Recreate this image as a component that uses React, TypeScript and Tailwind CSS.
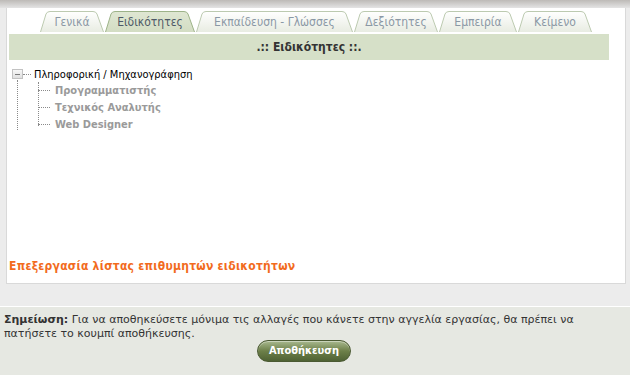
import React from "react";

const font = { fontFamily: '"DejaVu Sans Condensed", "DejaVu Sans", Verdana, sans-serif' };
const wide = { fontFamily: '"DejaVu Sans", Verdana, sans-serif' };

function Tab({ label, w, active }: { label: string; w: number; active?: boolean }) {
  const h = 22;
  const d = `M0.5,${h} L6,4 Q7,1.5 10,1.5 L${w - 11},1.5 Q${w - 8},1.5 ${w - 7},4 L${w - 0.5},${h}`;
  const id = active ? "ga" : "gi";
  return (
    <div className="relative h-[22px] shrink-0" style={{ width: w }}>
      <svg className="absolute inset-0" width={w} height={h}>
        <defs>
          <linearGradient id="gi" x1="0" y1="0" x2="0" y2="1">
            <stop offset="0" stopColor="#ffffff" />
            <stop offset="1" stopColor="#e8ece2" />
          </linearGradient>
          <linearGradient id="ga" x1="0" y1="0" x2="0" y2="1">
            <stop offset="0" stopColor="#dfe7d3" />
            <stop offset="1" stopColor="#d3ddc3" />
          </linearGradient>
        </defs>
        <path d={d + " Z"} fill={`url(#${id})`} stroke="none" />
        <path d={d} fill="none" stroke={active ? "#9db389" : "#bccab0"} strokeWidth="1" />
      </svg>
      <div
        className={`relative flex h-full items-center justify-center pt-[1px] text-[12px] ${
          active ? "text-[#4d5966]" : "text-[#8b98a5]"
        }`}
      >
        {label}
      </div>
    </div>
  );
}

export default function App() {
  return (
    <div className="relative h-[375px] w-[630px] overflow-hidden bg-[#ececec] text-[#333]" style={font}>
      <div className="h-[8px] w-full bg-gradient-to-b from-[#bdbab7] to-[#e4e4e4]" />
      <div className="ml-[6px] flex h-[276px] w-[620px] flex-col border-x border-b border-[#d9d9d9] bg-white">
        <div className="mt-[2px] flex gap-[1px] pl-[33px]">
          <Tab label="Γενικά" w={64} />
          <Tab label="Ειδικότητες" w={90} active />
          <Tab label="Εκπαίδευση - Γλώσσες" w={157} />
          <Tab label="Δεξιότητες" w={84} />
          <Tab label="Εμπειρία" w={78} />
          <Tab label="Κείμενο" w={74} />
        </div>
        <div className="ml-[2px] mt-[2px] flex h-[26px] w-[600px] items-center justify-center bg-[#d6e0c8] text-[12px] font-bold text-[#333]">
          .:: Ειδικότητες ::.
        </div>
        <div className="relative ml-[5px] mt-[9px] h-[70px]">
          <div className="absolute left-0 top-0 flex h-[10px] w-[11px] items-center justify-center border border-[#c2c2c2] bg-gradient-to-b from-[#f7f7f7] to-[#e0e0e0]">
            <div className="h-[1px] w-[5px] bg-[#7a7a7a]" />
          </div>
          <div className="absolute left-[11px] top-[5px] w-[8px] border-t border-dotted border-[#8a8a8a]" />
          <div className="absolute left-[5px] top-[11px] h-[50px] border-l border-dotted border-[#8a8a8a]" />
          <div className="absolute left-[22px] top-[-1px] text-[11px] leading-[13px] text-black">
            Πληροφορική / Μηχανογράφηση
          </div>
          <div className="absolute left-[26px] top-[13px] h-[44px] border-l border-dotted border-[#8a8a8a]" />
          {["Προγραμματιστής", "Τεχνικός Αναλυτής", "Web Designer"].map((t, i) => (
            <div key={t} className="absolute left-[26px] flex items-center" style={{ top: 17 * (i + 1) - 2 }}>
              <div className="w-[12px] border-t border-dotted border-[#8a8a8a]" />
              <div className="ml-[5px] text-[11px] font-bold leading-[13px] text-[#9a9a9a]">{t}</div>
            </div>
          ))}
        </div>
        <div className="mt-auto mb-[8px] ml-[2px] text-[12px] font-bold tracking-[0.25px] text-[#f26b1d]">
          Επεξεργασία λίστας επιθυμητών ειδικοτήτων
        </div>
      </div>
      <div className="mt-[22px] h-[100px] border-t border-white bg-[#e6e8e2] px-[4px] pt-[6px]">
        <p className="w-[600px] text-[11px] leading-[14px] text-[#333]" style={wide}>
          <b>Σημείωση:</b> Για να αποθηκεύσετε μόνιμα τις αλλαγές που κάνετε στην αγγελία εργασίας, θα πρέπει να
          πατήσετε το κουμπί αποθήκευσης.
        </p>
        <div className="ml-[253px] mt-[-1px] flex h-[22px] w-[94px] items-center justify-center rounded-full border border-[#4b5a33] bg-gradient-to-b from-[#a9b98f] via-[#6d8049] to-[#4f6234] text-[11px] font-bold text-white shadow-[inset_0_1px_0_rgba(255,255,255,0.4)]">
          Αποθήκευση
        </div>
      </div>
    </div>
  );
}
